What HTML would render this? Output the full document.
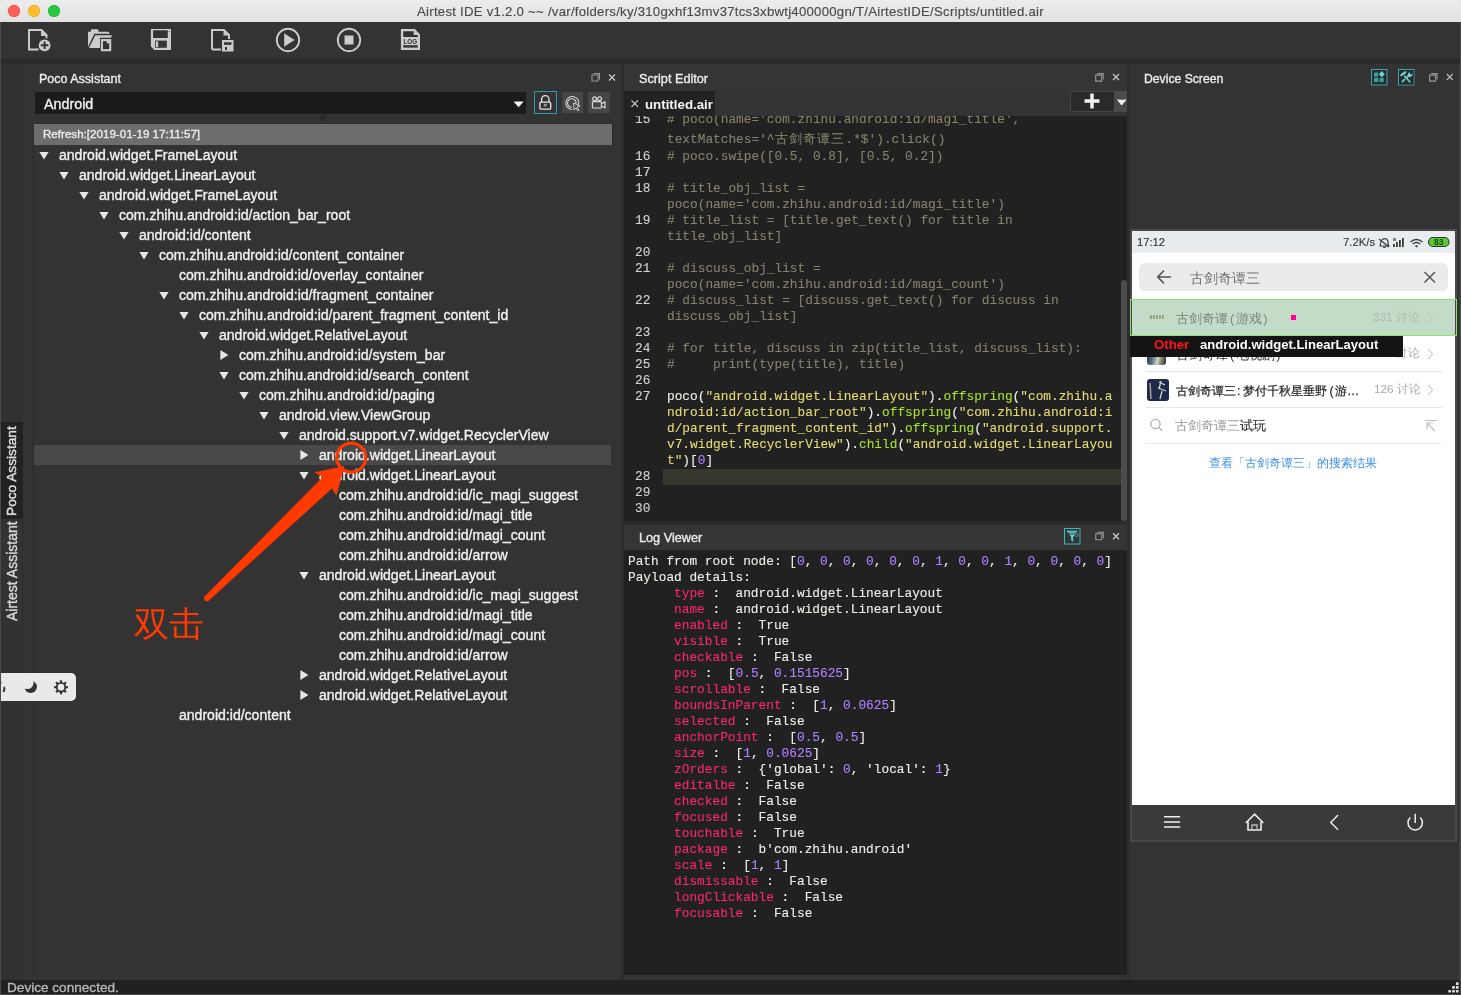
<!DOCTYPE html>
<html><head><meta charset="utf-8">
<style>
*{margin:0;padding:0;box-sizing:border-box}
html,body{width:1461px;height:995px;overflow:hidden;background:#333333;-webkit-font-smoothing:antialiased;font-family:"Liberation Sans",sans-serif;color:#e8e8e8}
.a{position:absolute}
.t{position:absolute;white-space:pre;line-height:1;will-change:transform;-webkit-text-stroke:0.35px currentColor}
.mono{will-change:transform;font-family:"Liberation Mono",monospace;font-size:12.8px;white-space:pre;position:absolute;line-height:1;-webkit-text-stroke:0.1px currentColor}
.mono span{-webkit-text-stroke:0.1px currentColor}
svg{position:absolute;overflow:visible}
</style></head><body>
<div class="a" style="left:0;top:0;width:1461px;height:12px;background:#e4e4e4"></div>
<div class="a" style="left:0;top:0;width:1461px;height:22px;background:linear-gradient(#ececec,#e2e2e2);border-radius:5px 5px 0 0"></div>
<div class="a" style="left:8px;top:5px;width:12px;height:12px;border-radius:50%;background:#fe5f57;box-shadow:inset 0 0 0 0.5px #e0443e"></div>
<div class="a" style="left:28px;top:5px;width:12px;height:12px;border-radius:50%;background:#febc2e;box-shadow:inset 0 0 0 0.5px #dea123"></div>
<div class="a" style="left:48px;top:5px;width:12px;height:12px;border-radius:50%;background:#28c840;box-shadow:inset 0 0 0 0.5px #1aab29"></div>
<div class="t" style="left:416.5px;top:4.78px;font-size:13.2px;color:#4b4b4b;letter-spacing:0.253px;-webkit-text-stroke:0.15px #4b4b4b">Airtest IDE v1.2.0 ~~ /var/folders/ky/310gxhf13mv37tcs3xbwtj400000gn/T/AirtestIDE/Scripts/untitled.air</div>
<div class="a" style="left:0;top:22px;width:1461px;height:37px;background:#333333"></div>
<div class="a" style="left:0;top:59px;width:1461px;height:5px;background:#2a2a2a"></div>
<svg style="left:0;top:0" width="1461" height="64">
<g fill="none" stroke="#c9cbcd" stroke-width="2">
 <path d="M29 30 H41.5 L46.5 35 V38.2 M38.6 49.4 H29 V29"/>
</g>
<path d="M41 29.5 L47.5 36 H41 Z" fill="#c9cbcd"/>
<circle cx="44.6" cy="45.3" r="5.9" fill="#c9cbcd"/>
<path d="M44.6 41.5 V49.1 M40.8 45.3 H48.4" stroke="#333" stroke-width="1.9"/>
<!-- folder -->
<path d="M88 31.7 H90.9 V29.9 Q91 29.2 91.7 29.2 H97.9 L98.8 31.7 H108.8 L109.7 33.7 H94.4 L88 47 Z" fill="#c9cbcd"/>
<path d="M89 48 L95.3 35.2 H112 L111.1 37.8 H100 V48 Z" fill="#c9cbcd"/>
<rect x="101.9" y="40.1" width="8.3" height="10.1" fill="#333" stroke="#c9cbcd" stroke-width="2.1"/>
<rect x="106.6" y="40.5" width="2.7" height="2.9" fill="#c9cbcd"/>
<!-- save -->
<path d="M150.9 28.9 H171 V50 H154.4 L150.9 46.5 Z" fill="#c9cbcd"/>
<rect x="153.1" y="30.3" width="14.7" height="7.7" fill="#333"/>
<rect x="155.1" y="40.6" width="11.7" height="7.2" fill="#333"/>
<rect x="155.9" y="41.5" width="2.3" height="5.6" fill="#c9cbcd"/>
<circle cx="169.4" cy="31.6" r="0.6" fill="#333"/>
<!-- save as -->
<path d="M212 49.5 V30 H224 L229 35 V39" fill="none" stroke="#c9cbcd" stroke-width="2"/>
<path d="M223.5 29.5 L229.5 35.5 H223.5 Z" fill="#c9cbcd"/>
<path d="M212 49.5 H221" stroke="#c9cbcd" stroke-width="2"/>
<rect x="222" y="40" width="11.5" height="11.5" fill="#c9cbcd"/>
<rect x="224" y="42.3" width="7.5" height="2.5" fill="#333"/>
<rect x="225" y="47" width="2" height="3" fill="#333"/>
<!-- play -->
<circle cx="288" cy="40" r="11.2" fill="none" stroke="#c9cbcd" stroke-width="1.9"/>
<path d="M284.2 33.2 V46.8 L294.5 40 Z" fill="#c9cbcd"/>
<!-- stop -->
<circle cx="349" cy="40" r="11.2" fill="none" stroke="#c9cbcd" stroke-width="1.9"/>
<rect x="344.5" y="35.5" width="9" height="9" fill="#c9cbcd"/>
<!-- log -->
<path d="M400.9 28.9 H414.8 L420 34.2 V50 H400.9 Z" fill="#c9cbcd"/>
<path d="M403.2 31.2 H413.7 V34.9 H417.8 V36.9 H403.2 Z" fill="#333"/>
<rect x="403.2" y="45.2" width="14.6" height="2.4" fill="#333"/>
<text x="410.3" y="43.8" font-family="Liberation Sans" font-weight="bold" font-size="6.5" fill="#333" text-anchor="middle" textLength="13.6" lengthAdjust="spacingAndGlyphs">LOG</text>
</svg>
<div class="a" style="left:0;top:64px;width:1px;height:916px;background:#4a4a4a"></div>
<div class="a" style="left:1px;top:64px;width:22px;height:916px;background:#313131"></div>
<div class="a" style="left:1px;top:422px;width:22px;height:97px;background:#222222"></div>
<div class="a" style="left:1px;top:519px;width:22px;height:104px;background:#333333;border-right:1px solid #2b2b2b"></div>
<div class="t" style="left:0px;top:0px;font-size:13.7px;color:#e0e0e0;transform-origin:0 0;transform:translate(5px,516px) rotate(-90deg)">Poco Assistant</div>
<div class="t" style="left:0px;top:0px;font-size:14px;color:#d8d8d8;transform-origin:0 0;transform:translate(5px,621px) rotate(-90deg)">Airtest Assistant</div>
<div class="t" style="left:38.5px;top:73.38px;font-size:12.5px;color:#ececec;">Poco Assistant</div>
<svg style="left:0;top:0" width="1461" height="100">
<path d="M592 75.0 h6 v6 h-6 z" fill="none" stroke="#9a9a9a" stroke-width="1.1"/>
<path d="M593.5 73.5 h6 v6" fill="none" stroke="#9a9a9a" stroke-width="1.1"/>
<path d="M609 74.5 L615 80.5 M615 74.5 L609 80.5" stroke="#c8c8c8" stroke-width="1.3"/>
</svg>
<div class="a" style="left:35px;top:92px;width:491px;height:22px;background:#1b1b1b"></div>
<div class="t" style="left:44px;top:96.55px;font-size:14.3px;color:#f0f0f0;">Android</div>
<svg style="left:0;top:0" width="1461" height="130"><path d="M513.5 101.5 H523.7 L518.6 107.3 Z" fill="#f2f2f2"/></svg>
<div class="a" style="left:320px;top:115px;width:6px;height:6px;border-radius:50%;background:#2a2a2a"></div>
<div class="a" style="left:534px;top:91px;width:23px;height:23px;border:1px solid #2b9ea3;background:#333"></div>
<div class="a" style="left:562px;top:92px;width:21px;height:21px;background:#464646"></div>
<div class="a" style="left:588px;top:92px;width:22px;height:21px;background:#464646"></div>
<svg style="left:0;top:0" width="1461" height="130">
<g fill="none" stroke="#e8e8e8" stroke-width="1.3">
<path d="M541.6 102 V99.3 A3.7 3.7 0 0 1 549 99.3 V102"/>
<rect x="539.9" y="102.2" width="10.8" height="6.9" rx="1.2"/>
</g>
<circle cx="545.3" cy="105.2" r="1.1" fill="none" stroke="#e8e8e8" stroke-width="0.8"/>
<g fill="none" stroke="#d8d8d8" stroke-width="1.1">
<path d="M578.5 105 A6.5 6.5 0 1 0 572 109.5"/>
<path d="M576 104 A4.3 4.3 0 1 0 571.8 107.3"/>
</g>
<path d="M573.5 103 L580 106 L577 107 L579 110 L577.8 110.7 L576 107.8 L574 110 Z" fill="none" stroke="#d8d8d8" stroke-width="0.9"/>
<g fill="none" stroke="#d8d8d8" stroke-width="1.2">
<circle cx="594.6" cy="98.7" r="1.9"/>
<circle cx="599.6" cy="98.7" r="1.9"/>
<rect x="592.4" y="101.6" width="9" height="6.4" rx="1"/>
<path d="M601.4 103.6 L605 101.9 V107.8 L601.4 106"/>
</g>
</svg>
<div class="a" style="left:34px;top:123px;width:579px;height:22px;background:#6d6d6d;border-top:1px solid #2c2c2c;border-right:1.5px solid #262626"></div>
<div class="t" style="left:43px;top:128.14px;font-size:11.6px;color:#ececec;">Refresh:[2019-01-19 17:11:57]</div>
<div class="a" style="left:33px;top:144px;width:1px;height:831px;background:#2a2a2a"></div>
<div class="a" style="left:34px;top:445px;width:577px;height:20px;background:#494949"></div>
<div class="t" style="left:59px;top:148.36px;font-size:14.05px;color:#f2f2f2;">android.widget.FrameLayout</div>
<div class="t" style="left:79px;top:168.36px;font-size:14.05px;color:#f2f2f2;">android.widget.LinearLayout</div>
<div class="t" style="left:99px;top:188.36px;font-size:14.05px;color:#f2f2f2;">android.widget.FrameLayout</div>
<div class="t" style="left:119px;top:208.36px;font-size:14.05px;color:#f2f2f2;">com.zhihu.android:id/action_bar_root</div>
<div class="t" style="left:139px;top:228.36px;font-size:14.05px;color:#f2f2f2;">android:id/content</div>
<div class="t" style="left:159px;top:248.36px;font-size:14.05px;color:#f2f2f2;">com.zhihu.android:id/content_container</div>
<div class="t" style="left:179px;top:268.36px;font-size:14.05px;color:#f2f2f2;">com.zhihu.android:id/overlay_container</div>
<div class="t" style="left:179px;top:288.36px;font-size:14.05px;color:#f2f2f2;">com.zhihu.android:id/fragment_container</div>
<div class="t" style="left:199px;top:308.36px;font-size:14.05px;color:#f2f2f2;">com.zhihu.android:id/parent_fragment_content_id</div>
<div class="t" style="left:219px;top:328.36px;font-size:14.05px;color:#f2f2f2;">android.widget.RelativeLayout</div>
<div class="t" style="left:239px;top:348.36px;font-size:14.05px;color:#f2f2f2;">com.zhihu.android:id/system_bar</div>
<div class="t" style="left:239px;top:368.36px;font-size:14.05px;color:#f2f2f2;">com.zhihu.android:id/search_content</div>
<div class="t" style="left:259px;top:388.36px;font-size:14.05px;color:#f2f2f2;">com.zhihu.android:id/paging</div>
<div class="t" style="left:279px;top:408.36px;font-size:14.05px;color:#f2f2f2;">android.view.ViewGroup</div>
<div class="t" style="left:299px;top:428.36px;font-size:14.05px;color:#f2f2f2;">android.support.v7.widget.RecyclerView</div>
<div class="t" style="left:319px;top:448.36px;font-size:14.05px;color:#f2f2f2;">android.widget.LinearLayout</div>
<div class="t" style="left:319px;top:468.36px;font-size:14.05px;color:#f2f2f2;">android.widget.LinearLayout</div>
<div class="t" style="left:339px;top:488.36px;font-size:14.05px;color:#f2f2f2;">com.zhihu.android:id/ic_magi_suggest</div>
<div class="t" style="left:339px;top:508.36px;font-size:14.05px;color:#f2f2f2;">com.zhihu.android:id/magi_title</div>
<div class="t" style="left:339px;top:528.36px;font-size:14.05px;color:#f2f2f2;">com.zhihu.android:id/magi_count</div>
<div class="t" style="left:339px;top:548.36px;font-size:14.05px;color:#f2f2f2;">com.zhihu.android:id/arrow</div>
<div class="t" style="left:319px;top:568.36px;font-size:14.05px;color:#f2f2f2;">android.widget.LinearLayout</div>
<div class="t" style="left:339px;top:588.36px;font-size:14.05px;color:#f2f2f2;">com.zhihu.android:id/ic_magi_suggest</div>
<div class="t" style="left:339px;top:608.36px;font-size:14.05px;color:#f2f2f2;">com.zhihu.android:id/magi_title</div>
<div class="t" style="left:339px;top:628.36px;font-size:14.05px;color:#f2f2f2;">com.zhihu.android:id/magi_count</div>
<div class="t" style="left:339px;top:648.36px;font-size:14.05px;color:#f2f2f2;">com.zhihu.android:id/arrow</div>
<div class="t" style="left:319px;top:668.36px;font-size:14.05px;color:#f2f2f2;">android.widget.RelativeLayout</div>
<div class="t" style="left:319px;top:688.36px;font-size:14.05px;color:#f2f2f2;">android.widget.RelativeLayout</div>
<div class="t" style="left:179px;top:708.36px;font-size:14.05px;color:#f2f2f2;">android:id/content</div>
<svg style="left:0;top:0" width="640" height="980"><g fill="#e6e6e6"><path d="M39.4 152 H48.599999999999994 L44.0 159.6 Z"/><path d="M59.4 172 H68.6 L64.0 179.6 Z"/><path d="M79.4 192 H88.60000000000001 L84.0 199.6 Z"/><path d="M99.4 212 H108.60000000000001 L104.0 219.6 Z"/><path d="M119.4 232 H128.6 L124.0 239.6 Z"/><path d="M139.4 252 H148.6 L144.0 259.6 Z"/><path d="M159.4 292 H168.6 L164.0 299.6 Z"/><path d="M179.4 312 H188.6 L184.0 319.6 Z"/><path d="M199.4 332 H208.6 L204.0 339.6 Z"/><path d="M220.4 350 V360 L228.4 355 Z"/><path d="M219.4 372 H228.6 L224.0 379.6 Z"/><path d="M239.4 392 H248.6 L244.0 399.6 Z"/><path d="M259.4 412 H268.59999999999997 L264.0 419.6 Z"/><path d="M279.4 432 H288.59999999999997 L284.0 439.6 Z"/><path d="M300.4 450 V460 L308.4 455 Z"/><path d="M299.4 472 H308.59999999999997 L304.0 479.6 Z"/><path d="M299.4 572 H308.59999999999997 L304.0 579.6 Z"/><path d="M300.4 670 V680 L308.4 675 Z"/><path d="M300.4 690 V700 L308.4 695 Z"/></g></svg>
<svg style="left:0;top:0" width="640" height="980">
<circle cx="351.2" cy="457.6" r="14.5" fill="none" stroke="#ff3a00" stroke-width="3.2"/>
<path d="M204.83 596.56 L323 477.1 L315 472.5 L343.8 466.5 L336.4 495 L332.2 488 L208.57 600.44 Z" fill="#ff3a00" stroke="#ff3a00" stroke-width="0.6" stroke-linejoin="round"/>
<circle cx="206.7" cy="598.5" r="2.7" fill="#ff3a00"/>
</svg>
<div class="t" style="left:133.5px;top:606.67px;font-size:34.5px;color:#ff3a00;-webkit-text-stroke:0">双击</div>
<div class="a" style="left:-6px;top:673px;width:82px;height:28px;background:#e9e9e9;border-radius:5px"></div>
<svg style="left:0;top:0" width="80" height="720">
<defs><mask id="moonm"><rect x="0" y="660" width="80" height="60" fill="#fff"/><circle cx="27.3" cy="682.8" r="6.3" fill="#000"/></mask></defs>
<path d="M0.2 680.3 L0.8 683.5" stroke="#333" stroke-width="1.5"/>
<path d="M3.8 687 Q5.2 688.5 3.4 692" fill="none" stroke="#333" stroke-width="1.9"/>
<circle cx="30.7" cy="686.8" r="6.2" fill="#333" mask="url(#moonm)"/>
<g transform="translate(61,687.2)" fill="none" stroke="#333">
<circle r="4.3" stroke-width="1.9"/>
<path d="M0 -7 V-4.5 M0 4.5 V7 M-7 0 H-4.5 M4.5 0 H7 M-4.95 -4.95 L-3.2 -3.2 M3.2 3.2 L4.95 4.95 M-4.95 4.95 L-3.2 3.2 M3.2 -3.2 L4.95 -4.95" stroke-width="2.1"/>
</g>
</svg>
<div class="a" style="left:621px;top:64px;width:3px;height:916px;background:#2d2d2d"></div>
<div class="a" style="left:1127px;top:64px;width:3px;height:916px;background:#2d2d2d"></div>
<div class="a" style="left:624px;top:64px;width:503px;height:27px;background:#353535"></div>
<div class="t" style="left:639.2px;top:72.80px;font-size:12.7px;color:#ececec;">Script Editor</div>
<div class="a" style="left:624px;top:91px;width:503px;height:25px;background:#333333"></div>
<div class="a" style="left:624px;top:91px;width:91px;height:25px;background:#222222"></div>
<svg style="left:0;top:0" width="1461" height="200"><path d="M631.5 100.3 L638 106.8 M638 100.3 L631.5 106.8" stroke="#d0d0d0" stroke-width="1.2"/></svg>
<div class="t" style="left:645px;top:98.00px;font-size:13.3px;color:#f4f4f4;font-weight:bold;-webkit-text-stroke:0">untitled.air</div>
<div class="a" style="left:1070px;top:91px;width:45px;height:21px;background:#2a2a2a;border:1px solid #454545"></div>
<div class="a" style="left:1114px;top:91px;width:13px;height:21px;background:#4a4a4a"></div>
<svg style="left:0;top:0" width="1461" height="200">
<path d="M1092 93.5 V108.5 M1084.5 101 H1099.5" stroke="#eef2f4" stroke-width="3.4"/>
<path d="M1117 99.5 L1121.5 105.5 L1126.5 99.5 L1124.5 99.5 L1121.5 103 L1119 99.5 Z" fill="#eeeeee"/>
<path d="M1117.5 99.8 H1126 L1121.7 105.2 Z" fill="#eeeeee"/>
</svg>
<div class="a" style="left:624px;top:116px;width:503px;height:405px;background:#212121;overflow:hidden">
<div class="a" style="left:39px;top:353px;width:458px;height:16px;background:#37372f"></div>
<div class="a" style="left:497px;top:164px;width:6px;height:241px;background:#4c4c4c;border-radius:3px 3px 3px 3px"></div>
<div class="mono" style="left:10.5px;top:-1.83px;"><span style="color:#d4d4d4">15</span></div>
<div class="mono" style="left:43px;top:-1.83px;"><span style="color:#85816b"># poco(name='com.zhihu.android:id/magi_title',</span></div>
<div class="mono" style="left:43px;top:18.07px;"><span style="color:#85816b">textMatches='^</span><span style="color:#85816b;letter-spacing:1.2px">古剑奇谭三</span><span style="color:#85816b">.*$').click()</span></div>
<div class="mono" style="left:10.5px;top:35.07px;"><span style="color:#d4d4d4">16</span></div>
<div class="mono" style="left:43px;top:35.07px;"><span style="color:#85816b"># poco.swipe([0.5, 0.8], [0.5, 0.2])</span></div>
<div class="mono" style="left:10.5px;top:51.07px;"><span style="color:#d4d4d4">17</span></div>
<div class="mono" style="left:10.5px;top:67.07px;"><span style="color:#d4d4d4">18</span></div>
<div class="mono" style="left:43px;top:67.07px;"><span style="color:#85816b"># title_obj_list =</span></div>
<div class="mono" style="left:43px;top:83.07px;"><span style="color:#85816b">poco(name='com.zhihu.android:id/magi_title')</span></div>
<div class="mono" style="left:10.5px;top:99.07px;"><span style="color:#d4d4d4">19</span></div>
<div class="mono" style="left:43px;top:99.07px;"><span style="color:#85816b"># title_list = [title.get_text() for title in</span></div>
<div class="mono" style="left:43px;top:115.07px;"><span style="color:#85816b">title_obj_list]</span></div>
<div class="mono" style="left:10.5px;top:131.07px;"><span style="color:#d4d4d4">20</span></div>
<div class="mono" style="left:10.5px;top:147.07px;"><span style="color:#d4d4d4">21</span></div>
<div class="mono" style="left:43px;top:147.07px;"><span style="color:#85816b"># discuss_obj_list =</span></div>
<div class="mono" style="left:43px;top:163.07px;"><span style="color:#85816b">poco(name='com.zhihu.android:id/magi_count')</span></div>
<div class="mono" style="left:10.5px;top:179.07px;"><span style="color:#d4d4d4">22</span></div>
<div class="mono" style="left:43px;top:179.07px;"><span style="color:#85816b"># discuss_list = [discuss.get_text() for discuss in</span></div>
<div class="mono" style="left:43px;top:195.07px;"><span style="color:#85816b">discuss_obj_list]</span></div>
<div class="mono" style="left:10.5px;top:211.07px;"><span style="color:#d4d4d4">23</span></div>
<div class="mono" style="left:10.5px;top:227.07px;"><span style="color:#d4d4d4">24</span></div>
<div class="mono" style="left:43px;top:227.07px;"><span style="color:#85816b"># for title, discuss in zip(title_list, discuss_list):</span></div>
<div class="mono" style="left:10.5px;top:243.07px;"><span style="color:#d4d4d4">25</span></div>
<div class="mono" style="left:43px;top:243.07px;"><span style="color:#85816b">#     print(type(title), title)</span></div>
<div class="mono" style="left:10.5px;top:259.07px;"><span style="color:#d4d4d4">26</span></div>
<div class="mono" style="left:10.5px;top:275.07px;"><span style="color:#d4d4d4">27</span></div>
<div class="mono" style="left:43px;top:275.07px;"><span style="color:#f0f0ea">poco(</span><span style="color:#e6db74">"android.widget.LinearLayout"</span><span style="color:#f0f0ea">).</span><span style="color:#a6e22e">offspring</span><span style="color:#f0f0ea">(</span><span style="color:#e6db74">"com.zhihu.a</span></div>
<div class="mono" style="left:43px;top:291.07px;"><span style="color:#e6db74">ndroid:id/action_bar_root"</span><span style="color:#f0f0ea">).</span><span style="color:#a6e22e">offspring</span><span style="color:#f0f0ea">(</span><span style="color:#e6db74">"com.zhihu.android:i</span></div>
<div class="mono" style="left:43px;top:307.07px;"><span style="color:#e6db74">d/parent_fragment_content_id"</span><span style="color:#f0f0ea">).</span><span style="color:#a6e22e">offspring</span><span style="color:#f0f0ea">(</span><span style="color:#e6db74">"android.support.</span></div>
<div class="mono" style="left:43px;top:323.07px;"><span style="color:#e6db74">v7.widget.RecyclerView"</span><span style="color:#f0f0ea">).</span><span style="color:#a6e22e">child</span><span style="color:#f0f0ea">(</span><span style="color:#e6db74">"android.widget.LinearLayou</span></div>
<div class="mono" style="left:43px;top:339.07px;"><span style="color:#e6db74">t"</span><span style="color:#f0f0ea">)[</span><span style="color:#ae81ff">0</span><span style="color:#f0f0ea">]</span></div>
<div class="mono" style="left:10.5px;top:355.07px;"><span style="color:#d4d4d4">28</span></div>
<div class="mono" style="left:10.5px;top:371.07px;"><span style="color:#d4d4d4">29</span></div>
<div class="mono" style="left:10.5px;top:387.07px;"><span style="color:#d4d4d4">30</span></div>
</div>
<div class="a" style="left:624px;top:521px;width:503px;height:4px;background:#2c2c2c"></div>
<div class="a" style="left:624px;top:525px;width:502px;height:25px;background:#353535"></div>
<div class="t" style="left:639.2px;top:531.81px;font-size:12.7px;color:#ececec;">Log Viewer</div>
<svg style="left:0;top:0" width="1461" height="600">
<rect x="1064.5" y="528.5" width="15.5" height="15.5" fill="none" stroke="#3ab5bb" stroke-width="1"/>
<path d="M1066.5 531 Q1072 529.5 1077.5 531 L1073.3 536.2 V541.5 L1071 540 V536.2 Z" fill="#5fd3d8" opacity="0.55"/>
<path d="M1066.8 531.2 Q1072 532.8 1077.2 531.2" fill="none" stroke="#5fd3d8" stroke-width="1"/>
<path d="M1070.3 535 H1074 V536 L1072.8 537 V541.8 L1071.5 540.8 V537 L1070.3 536 Z" fill="#6ad8dc"/>
<circle cx="1076.5" cy="535" r="1.6" fill="none" stroke="#5fd3d8" stroke-width="0.8" opacity="0.7"/>
</svg>
<div class="a" style="left:624px;top:550px;width:503px;height:425px;background:#212121"></div>
<div class="a" style="left:624px;top:975px;width:503px;height:5px;background:#333333"></div>
<div class="mono" style="left:628.3px;top:555.87px;"><span style="color:#f0f0ea">Path from root node: [</span><span style="color:#ae81ff">0</span><span style="color:#f0f0ea">, </span><span style="color:#ae81ff">0</span><span style="color:#f0f0ea">, </span><span style="color:#ae81ff">0</span><span style="color:#f0f0ea">, </span><span style="color:#ae81ff">0</span><span style="color:#f0f0ea">, </span><span style="color:#ae81ff">0</span><span style="color:#f0f0ea">, </span><span style="color:#ae81ff">0</span><span style="color:#f0f0ea">, </span><span style="color:#ae81ff">1</span><span style="color:#f0f0ea">, </span><span style="color:#ae81ff">0</span><span style="color:#f0f0ea">, </span><span style="color:#ae81ff">0</span><span style="color:#f0f0ea">, </span><span style="color:#ae81ff">1</span><span style="color:#f0f0ea">, </span><span style="color:#ae81ff">0</span><span style="color:#f0f0ea">, </span><span style="color:#ae81ff">0</span><span style="color:#f0f0ea">, </span><span style="color:#ae81ff">0</span><span style="color:#f0f0ea">, </span><span style="color:#ae81ff">0</span><span style="color:#f0f0ea">]</span></div>
<div class="mono" style="left:628.3px;top:571.87px;"><span style="color:#f0f0ea">Payload details:</span></div>
<div class="mono" style="left:628.3px;top:587.87px;"><span style="color:#f0f0ea">      </span><span style="color:#f92672">type</span><span style="color:#f0f0ea"> :  </span><span style="color:#f0f0ea">android.widget.LinearLayout</span></div>
<div class="mono" style="left:628.3px;top:603.87px;"><span style="color:#f0f0ea">      </span><span style="color:#f92672">name</span><span style="color:#f0f0ea"> :  </span><span style="color:#f0f0ea">android.widget.LinearLayout</span></div>
<div class="mono" style="left:628.3px;top:619.87px;"><span style="color:#f0f0ea">      </span><span style="color:#f92672">enabled</span><span style="color:#f0f0ea"> :  </span><span style="color:#f0f0ea">True</span></div>
<div class="mono" style="left:628.3px;top:635.87px;"><span style="color:#f0f0ea">      </span><span style="color:#f92672">visible</span><span style="color:#f0f0ea"> :  </span><span style="color:#f0f0ea">True</span></div>
<div class="mono" style="left:628.3px;top:651.87px;"><span style="color:#f0f0ea">      </span><span style="color:#f92672">checkable</span><span style="color:#f0f0ea"> :  </span><span style="color:#f0f0ea">False</span></div>
<div class="mono" style="left:628.3px;top:667.87px;"><span style="color:#f0f0ea">      </span><span style="color:#f92672">pos</span><span style="color:#f0f0ea"> :  </span><span style="color:#f0f0ea">[</span><span style="color:#ae81ff">0.5</span><span style="color:#f0f0ea">, </span><span style="color:#ae81ff">0.1515625</span><span style="color:#f0f0ea">]</span></div>
<div class="mono" style="left:628.3px;top:683.87px;"><span style="color:#f0f0ea">      </span><span style="color:#f92672">scrollable</span><span style="color:#f0f0ea"> :  </span><span style="color:#f0f0ea">False</span></div>
<div class="mono" style="left:628.3px;top:699.87px;"><span style="color:#f0f0ea">      </span><span style="color:#f92672">boundsInParent</span><span style="color:#f0f0ea"> :  </span><span style="color:#f0f0ea">[</span><span style="color:#ae81ff">1</span><span style="color:#f0f0ea">, </span><span style="color:#ae81ff">0.0625</span><span style="color:#f0f0ea">]</span></div>
<div class="mono" style="left:628.3px;top:715.87px;"><span style="color:#f0f0ea">      </span><span style="color:#f92672">selected</span><span style="color:#f0f0ea"> :  </span><span style="color:#f0f0ea">False</span></div>
<div class="mono" style="left:628.3px;top:731.87px;"><span style="color:#f0f0ea">      </span><span style="color:#f92672">anchorPoint</span><span style="color:#f0f0ea"> :  </span><span style="color:#f0f0ea">[</span><span style="color:#ae81ff">0.5</span><span style="color:#f0f0ea">, </span><span style="color:#ae81ff">0.5</span><span style="color:#f0f0ea">]</span></div>
<div class="mono" style="left:628.3px;top:747.87px;"><span style="color:#f0f0ea">      </span><span style="color:#f92672">size</span><span style="color:#f0f0ea"> :  </span><span style="color:#f0f0ea">[</span><span style="color:#ae81ff">1</span><span style="color:#f0f0ea">, </span><span style="color:#ae81ff">0.0625</span><span style="color:#f0f0ea">]</span></div>
<div class="mono" style="left:628.3px;top:763.87px;"><span style="color:#f0f0ea">      </span><span style="color:#f92672">zOrders</span><span style="color:#f0f0ea"> :  </span><span style="color:#f0f0ea">{'global': </span><span style="color:#ae81ff">0</span><span style="color:#f0f0ea">, 'local': </span><span style="color:#ae81ff">1</span><span style="color:#f0f0ea">}</span></div>
<div class="mono" style="left:628.3px;top:779.87px;"><span style="color:#f0f0ea">      </span><span style="color:#f92672">editalbe</span><span style="color:#f0f0ea"> :  </span><span style="color:#f0f0ea">False</span></div>
<div class="mono" style="left:628.3px;top:795.87px;"><span style="color:#f0f0ea">      </span><span style="color:#f92672">checked</span><span style="color:#f0f0ea"> :  </span><span style="color:#f0f0ea">False</span></div>
<div class="mono" style="left:628.3px;top:811.87px;"><span style="color:#f0f0ea">      </span><span style="color:#f92672">focused</span><span style="color:#f0f0ea"> :  </span><span style="color:#f0f0ea">False</span></div>
<div class="mono" style="left:628.3px;top:827.87px;"><span style="color:#f0f0ea">      </span><span style="color:#f92672">touchable</span><span style="color:#f0f0ea"> :  </span><span style="color:#f0f0ea">True</span></div>
<div class="mono" style="left:628.3px;top:843.87px;"><span style="color:#f0f0ea">      </span><span style="color:#f92672">package</span><span style="color:#f0f0ea"> :  </span><span style="color:#f0f0ea">b'com.zhihu.android'</span></div>
<div class="mono" style="left:628.3px;top:859.87px;"><span style="color:#f0f0ea">      </span><span style="color:#f92672">scale</span><span style="color:#f0f0ea"> :  </span><span style="color:#f0f0ea">[</span><span style="color:#ae81ff">1</span><span style="color:#f0f0ea">, </span><span style="color:#ae81ff">1</span><span style="color:#f0f0ea">]</span></div>
<div class="mono" style="left:628.3px;top:875.87px;"><span style="color:#f0f0ea">      </span><span style="color:#f92672">dismissable</span><span style="color:#f0f0ea"> :  </span><span style="color:#f0f0ea">False</span></div>
<div class="mono" style="left:628.3px;top:891.87px;"><span style="color:#f0f0ea">      </span><span style="color:#f92672">longClickable</span><span style="color:#f0f0ea"> :  </span><span style="color:#f0f0ea">False</span></div>
<div class="mono" style="left:628.3px;top:907.87px;"><span style="color:#f0f0ea">      </span><span style="color:#f92672">focusable</span><span style="color:#f0f0ea"> :  </span><span style="color:#f0f0ea">False</span></div>
<svg style="left:0;top:0" width="1461" height="600">
<g fill="none" stroke="#9a9a9a" stroke-width="1.1">
<path d="M1095.7 75.1 h6 v6 h-6 z"/><path d="M1097.2 73.6 h6 v6"/>
<path d="M1095.8 533.7 h6 v6 h-6 z"/><path d="M1097.3 532.2 h6 v6"/>
</g>
<g stroke="#c8c8c8" stroke-width="1.3">
<path d="M1113 74 L1119 80 M1119 74 L1113 80"/>
<path d="M1113 533.2 L1119 539.2 M1119 533.2 L1113 539.2"/>
</g>
</svg>
<div class="a" style="left:1130px;top:64px;width:331px;height:916px;background:#333333"></div>
<div class="a" style="left:1459px;top:64px;width:2px;height:916px;background:#3c3c3c"></div>
<div class="t" style="left:1143.5px;top:73.23px;font-size:12.2px;color:#ececec;">Device Screen</div>
<svg style="left:0;top:0" width="1461" height="120">
<rect x="1371.5" y="69.5" width="15.5" height="15.5" fill="#2c2c2c" stroke="#3aa5ab" stroke-width="1"/>
<rect x="1374" y="72.5" width="4.2" height="4.2" fill="#3a9ea2"/>
<rect x="1374" y="77.8" width="4.2" height="4.2" fill="#3a9ea2"/>
<rect x="1379.5" y="77.8" width="4.2" height="4.2" fill="#3a9ea2"/>
<path d="M1381.8 71 L1384.8 74.2 L1381.8 77.2 L1378.8 74.2 Z" fill="#6ad4d8"/>
<rect x="1398.5" y="69.5" width="15.5" height="15.5" fill="none" stroke="#3aa5ab" stroke-width="1"/>
<rect x="1399" y="70" width="14.5" height="14.5" fill="#2c2c2c"/>
<g stroke="#6fd0d2" stroke-width="1.6" stroke-linecap="round" fill="none">
<path d="M1404.8 76.4 L1409.8 81.8"/>
<path d="M1402.4 81.6 L1404.6 79.4"/>
<path d="M1406.4 77.6 L1407.6 76.4"/>
</g>
<path d="M1400 75.6 L1401 74 L1404.3 71.6 L1406.2 71.3 L1406.6 72.1 L1404.8 74.6 L1402.8 75.2 L1401.2 76.4 Z" fill="#6fd0d2"/>
<path d="M1407.2 77.2 L1408.2 73.5 L1409.3 71.8 L1410 73.8 L1411 74.4 L1412.6 73.2 L1412.3 75.4 L1410.5 77.1 Z" fill="#6fd0d2"/>

<g fill="none" stroke="#9a9a9a" stroke-width="1.1">
<path d="M1429.6 75.1 h6 v6 h-6 z"/><path d="M1431.1 73.6 h6 v6"/>
</g>
<path d="M1446.8 74 L1452.8 80 M1452.8 74 L1446.8 80" stroke="#b8b8b8" stroke-width="1.2"/>
</svg>
<div class="a" style="left:1130px;top:229px;width:327px;height:613px;background:#484848"></div>
<div class="a" style="left:1132px;top:231px;width:323px;height:574px;background:#ffffff;overflow:hidden">
<div class="a" style="left:0;top:0;width:323px;height:22px;background:#e9ecef"></div>
<div class="t" style="left:5px;top:6.38px;font-size:11.2px;color:#333333;-webkit-text-stroke:0.15px #333">17:12</div>
<div class="t" style="left:211.29999999999995px;top:5.89px;font-size:11.3px;color:#3a3a3a;-webkit-text-stroke:0.15px #3a3a3a">7.2K/s</div>
<svg style="left:0;top:0" width="323" height="30">
<g fill="none" stroke="#3a3a3a" stroke-width="1.2">
<path d="M248 15 Q249 9 250.5 8.5 Q252 7 254.5 8 Q256.5 9.5 256 13 L256.8 15 Z"/>
<path d="M247 8 L257 16"/>
</g>
<path d="M251 16.2 h3" stroke="#3a3a3a" stroke-width="1.2"/>
<g fill="#3a3a3a">
<rect x="261" y="13" width="1.8" height="3"/><rect x="264" y="11" width="1.8" height="5"/>
<rect x="267" y="9" width="1.8" height="7"/><rect x="270" y="7" width="1.8" height="9"/>
<rect x="261" y="7" width="3" height="3" opacity="0.6"/>
</g>
<g fill="none" stroke="#3a3a3a" stroke-width="1.3">
<path d="M278.5 11 Q284.5 6 290.5 11"/>
<path d="M280.7 13 Q284.5 10 288.3 13"/>
</g>
<path d="M282.8 15 L284.5 16.5 L286.2 15 Q284.5 13.5 282.8 15 Z" fill="#3a3a3a"/>
<rect x="296.5" y="6.5" width="20.5" height="9" rx="4.5" fill="#5ec934" stroke="#2e3a2e" stroke-width="1.1"/>
<text x="306.7" y="14.4" font-family="Liberation Sans" font-size="8.6" font-weight="bold" fill="#164a10" text-anchor="middle">83</text>
</svg>
<div class="a" style="left:7px;top:32px;width:309px;height:28px;background:#ebebeb;border-radius:6px"></div>
<svg style="left:0;top:0" width="323" height="80">
<path d="M39 46 H26 M32 39.5 L25.8 46 L32 52.5" fill="none" stroke="#555" stroke-width="1.7"/>
<path d="M292.5 41 L303 51.5 M303 41 L292.5 51.5" stroke="#555" stroke-width="1.5"/>
</svg>
<div class="t" style="left:57.5px;top:39.52px;font-size:14.1px;color:#6f6f6f;-webkit-text-stroke:0">古剑奇谭三</div>
<div class="a" style="left:-2px;top:68px;width:327px;height:37px;background:#c2dcc8"></div>
<div class="a" style="left:18px;top:84px;width:15px;height:4px;background:repeating-linear-gradient(90deg,#8a9a6a 0 2px,transparent 2px 3px);opacity:0.8"></div>
<div class="t" style="left:44px;top:81.62px;font-size:12.8px;color:#78857b;-webkit-text-stroke:0">古剑奇谭<span style="margin:0 1.5px 0 2px">(</span>游戏<span style="margin-left:1.5px">)</span></div>
<div class="a" style="left:159px;top:84px;width:5px;height:5px;background:#ff0090"></div>
<div class="t" style="left:241px;top:81.47px;font-size:11.8px;color:#a9bcae;-webkit-text-stroke:0">331 讨论</div>
<div class="a" style="left:14.5px;top:112px;width:19px;height:22px;border-radius:3px;background:linear-gradient(100deg,#1e2c38 0%,#4f7282 35%,#d6d2c2 60%,#8a8878 75%,#2a2620 100%)"></div>
<div class="t" style="left:44px;top:117.62px;font-size:12.8px;color:#333333;-webkit-text-stroke:0">古剑奇谭<span style="margin:0 1.5px 0 2px">(</span>电视剧<span style="margin-left:1.5px">)</span></div>
<div class="t" style="left:248px;top:117.47px;font-size:11.8px;color:#aaaaaa;-webkit-text-stroke:0">88 讨论</div>
<div class="a" style="left:14px;top:140px;width:296px;height:1px;background:#e2e2e2"></div>
<div class="a" style="left:14.5px;top:148px;width:22px;height:22px;border-radius:3px;background:#1f2a4a"></div>
<svg style="left:0;top:0" width="323" height="200">
<g stroke="#e8e6d8" stroke-width="1.3" fill="none" opacity="0.9">
<path d="M27 151 L33 154 M29 150 L27 158 M26 157 L34 160 M30 160 L28 168"/>
<path d="M18 152 L19 168" stroke="#b8b090" stroke-width="1.5"/>
</g>
</svg>
<div class="t" style="left:44px;top:154.04px;font-size:12.3px;color:#2a2a2a;-webkit-text-stroke:0.25px #2a2a2a">古剑奇谭三<span style="margin:0 3px 0 1px">:</span>梦付千秋星垂野<span style="margin:0 1.5px 0 2px">(</span>游…</div>
<div class="t" style="left:242px;top:153.47px;font-size:11.8px;color:#aaaaaa;-webkit-text-stroke:0">126 讨论</div>
<div class="a" style="left:14px;top:176px;width:296px;height:1px;background:#e6e6e6"></div>
<svg style="left:0;top:0" width="323" height="300"><g fill="none" stroke="#c4c4c4" stroke-width="1.1"><path d="M296 82 L300.5 87 L296 92"/><path d="M296 118 L300.5 123 L296 128"/><path d="M296 154 L300.5 159 L296 164"/></g></svg>
<svg style="left:0;top:0" width="323" height="300">
<circle cx="23.5" cy="193" r="4.6" fill="none" stroke="#b0b0b0" stroke-width="1.3"/>
<path d="M27 196.5 L30 199.5" stroke="#b0b0b0" stroke-width="1.4"/>
<path d="M303 200 L295 192 M295 192 V198 M295 192 H301 M293 189.5 H305" fill="none" stroke="#c0c0c0" stroke-width="1.2"/>
</svg>
<div class="t" style="left:43px;top:188.79px;font-size:12.6px;color:#9a9a9a;-webkit-text-stroke:0">古剑奇谭三</div>
<div class="t" style="left:107.5px;top:188.79px;font-size:12.6px;color:#333333;-webkit-text-stroke:0.15px #333">试玩</div>
<div class="a" style="left:14px;top:212px;width:296px;height:1px;background:#ececec"></div>
<div class="t" style="left:77px;top:225.91px;font-size:12.1px;color:#3b8fe8;-webkit-text-stroke:0">查看「古剑奇谭三」的搜索结果</div>
</div>
<div class="a" style="left:1130px;top:299px;width:327px;height:37px;border:1px solid #8ee36a"></div>
<div class="a" style="left:1130px;top:336px;width:273px;height:21px;background:#141414"></div>
<div class="t" style="left:1153.5px;top:337.58px;font-size:13.2px;color:#ff1515;font-weight:bold;-webkit-text-stroke:0">Other</div>
<div class="t" style="left:1199.5px;top:337.71px;font-size:13.05px;color:#ffffff;font-weight:bold;-webkit-text-stroke:0">android.widget.LinearLayout</div>
<div class="a" style="left:1132px;top:805px;width:323px;height:35px;background:#3a3a3a"></div>
<svg style="left:0;top:0" width="1461" height="900">
<g stroke="#eeeeee" stroke-width="1.6" fill="none">
<path d="M1164 816.7 H1180.2 M1164 822 H1180.2 M1164 827 H1180.2"/>
<path d="M1245.8 823 L1254.6 814.2 L1263.4 823"/>
<path d="M1248 821.5 V830 H1261 V821.5"/>
<path d="M1252 830 V825 H1257 V830" stroke-width="1.3" stroke="#bbbbbb"/>
<path d="M1338 815 L1330.8 822.4 L1338 829.8" stroke-width="1.4"/>
<path d="M1410.3 817.5 A7.2 7.2 0 1 0 1420.1 817.5" stroke-width="1.5"/>
<path d="M1415.2 813.8 V823" stroke-width="1.5"/>
</g>
</svg>
<div class="a" style="left:0;top:980px;width:1461px;height:15px;background:#212121"></div>
<div class="t" style="left:6.5px;top:981.24px;font-size:13.6px;color:#b8b8b8;">Device connected.</div>
<svg style="left:0;top:0" width="1461" height="995">
<g fill="#e0e0e0"><rect x="1448.3" y="989.9" width="2.7" height="2.7" rx="0.5"/><rect x="1452.1" y="989.9" width="2.7" height="2.7" rx="0.5"/><rect x="1455.9" y="989.9" width="2.7" height="2.7" rx="0.5"/><rect x="1452.1" y="986.1" width="2.7" height="2.7" rx="0.5"/><rect x="1455.9" y="986.1" width="2.7" height="2.7" rx="0.5"/><rect x="1455.9" y="982.3" width="2.7" height="2.7" rx="0.5"/></g>
</svg>
<div class="a" style="left:0;top:22px;width:1px;height:973px;background:#4a4a4a"></div>
<div class="a" style="left:1460px;top:22px;width:1px;height:973px;background:#4a4a4a"></div>
<div class="a" style="left:0;top:994px;width:1461px;height:1px;background:#4a4a4a"></div>
</body></html>
